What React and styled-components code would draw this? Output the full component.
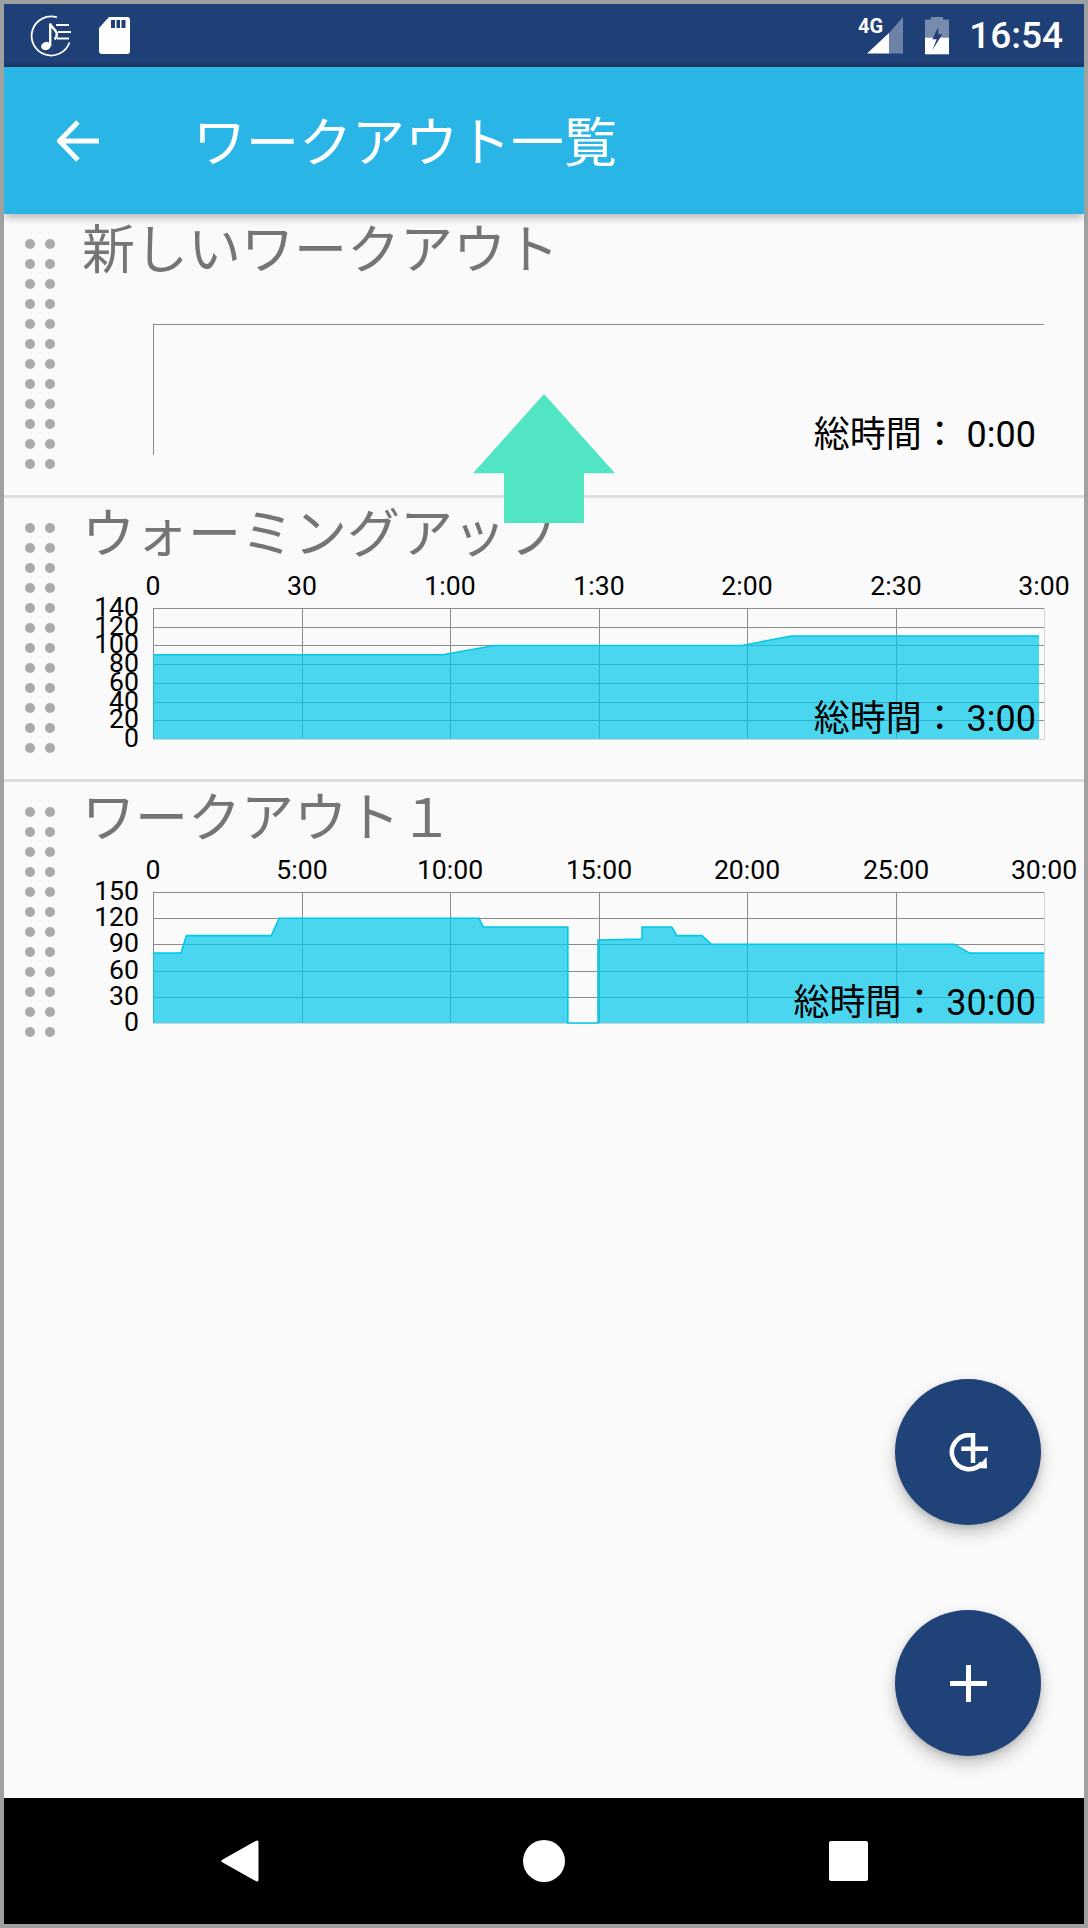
import React from "react";
import styled, { createGlobalStyle } from "styled-components";

const PLOT_LEFT = 71;
const PLOT_WIDTH = 891;
const PLOT_TOP = 34;
const PLOT_HEIGHT = 131;

const WARMUP = {
  title: "ウォーミングアップ",
  total: "3:00",
  duration: 180,
  maxValue: 140,
  xLabels: ["0", "30", "1:00", "1:30", "2:00", "2:30", "3:00"],
  yLabels: ["0", "20", "40", "60", "80", "100", "120", "140"],
  points: [[0, 90], [58.5, 90], [69, 100], [119, 100], [129, 110], [179, 110]],
};

const WORKOUT_1 = {
  title: "ワークアウト１",
  total: "30:00",
  duration: 1800,
  maxValue: 150,
  xLabels: ["0", "5:00", "10:00", "15:00", "20:00", "25:00", "30:00"],
  yLabels: ["0", "30", "60", "90", "120", "150"],
  points: [
    [0, 80], [56.6, 80], [67.5, 100], [239, 100], [255, 120], [658.6, 120], [667, 110],
    [838, 110], [838, 0], [899, 0], [899, 95], [988, 96], [988, 110], [1048, 110],
    [1058, 100], [1109, 100], [1128, 90], [1618, 90], [1650, 80], [1800, 80],
  ],
};

const NEW_WORKOUT = { title: "新しいワークアウト", total: "0:00" };

const WorkoutChart = ({ workout }) => {
  const { duration, maxValue, xLabels, yLabels, points } = workout;
  const empty = !points;
  const toX = (t) => PLOT_LEFT + (t / duration) * PLOT_WIDTH;
  const toY = (v) => PLOT_TOP + PLOT_HEIGHT - (v / maxValue) * PLOT_HEIGHT;
  const bottom = PLOT_TOP + PLOT_HEIGHT;
  const right = PLOT_LEFT + PLOT_WIDTH;

  if (empty) {
    return (
      <ChartSvg viewBox="0 0 1001 180">
        <GridLine x1={PLOT_LEFT} y1={PLOT_TOP + 0.5} x2={right} y2={PLOT_TOP + 0.5} />
        <GridLine x1={PLOT_LEFT + 0.5} y1={PLOT_TOP} x2={PLOT_LEFT + 0.5} y2={bottom} />
      </ChartSvg>
    );
  }

  const line = points.map(([t, v]) => `${toX(t)},${toY(v)}`).join(" ");
  const lastX = toX(points[points.length - 1][0]);
  const area = `${PLOT_LEFT},${bottom} ${line} ${lastX},${bottom}`;

  return (
    <ChartSvg viewBox="0 0 1001 180">
      {yLabels.map((label, i) => {
        const y = Math.round(PLOT_TOP + PLOT_HEIGHT - (i / (yLabels.length - 1)) * PLOT_HEIGHT);
        return (
          <g key={label}>
            {i > 0 && <GridLine x1={PLOT_LEFT} y1={y + 0.5} x2={right} y2={y + 0.5} />}
            <AxisText x={57} y={y + 8} textAnchor="end">{label}</AxisText>
          </g>
        );
      })}
      {xLabels.map((label, i) => {
        const x = Math.round(PLOT_LEFT + (i / (xLabels.length - 1)) * PLOT_WIDTH);
        return (
          <g key={label}>
            <GridLine $light={i === xLabels.length - 1} x1={x + 0.5} y1={PLOT_TOP} x2={x + 0.5} y2={bottom} />
            <AxisText x={x} y={21} textAnchor="middle">{label}</AxisText>
          </g>
        );
      })}
      <GridLine $light x1={PLOT_LEFT} y1={bottom + 0.5} x2={right} y2={bottom + 0.5} />
      <AreaFill points={area} />
      <AreaLine points={line} />
    </ChartSvg>
  );
};

const WorkoutRow = ({ workout, last }) => (
  <Row $last={last}>
    <Handle>
      {Array.from({ length: 24 }).map((_, i) => <Dot key={i} />)}
    </Handle>
    <RowBody>
      <Title>{workout.title}</Title>
      <WorkoutChart workout={workout} />
      <TotalTime>総時間： {workout.total}</TotalTime>
    </RowBody>
  </Row>
);

const App = () => (
  <>
    <GlobalStyle />
    <Frame>
      <StatusBar>
        <StatusLeft>
          <svg width="42" height="42" viewBox="0 0 42 42" fill="none" stroke="#fff">
            <path d="M27 2.4A19.5 19.5 0 1 0 39.5 27.5" strokeWidth="1.8" />
            <ellipse cx="16" cy="31" rx="5" ry="4" fill="#fff" stroke="none" transform="rotate(-20 16 31)" />
            <path d="M20.2 31V8.5c.5 4 5.5 5.500 6.500 9.500.5 2.500-.5 4.500-2 6.500" strokeWidth="2.400" />
            <path d="M26 10h13M28 17h13M27 23.500h12" strokeWidth="2" />
          </svg>
          <svg width="31" height="37" viewBox="0 0 31 37">
            <path d="M10 0H28a3 3 0 0 1 3 3V34a3 3 0 0 1-3 3H3a3 3 0 0 1-3-3V11Z" fill="#fff" />
            <path d="M12 3h4v8h-4ZM17.500 3h3.500v8h-3.500ZM22.500 3h4v8h-4Z" fill="#1f3f77" />
          </svg>
        </StatusLeft>
        <StatusRight>
          <svg width="45" height="38" viewBox="0 0 45 38">
            <NetworkText x="0" y="16">4G</NetworkText>
            <path d="M31 16L45 0V36.500H31Z" fill="#fff" opacity="0.35" />
            <path d="M9 36.500L31 16V36.500Z" fill="#fff" />
          </svg>
          <svg width="24" height="38" viewBox="0 0 24 38">
            <path d="M6 0H18V2.500H24V21H0V2.500H6Z" fill="#fff" opacity="0.4" />
            <rect y="20.700" width="24" height="16.600" fill="#fff" />
            <path d="M13.300 10L7.300 22.300H11.700L7.300 33.300L17.300 17.300H13.300Z" fill="#1f3f77" />
          </svg>
          <Clock>16:54</Clock>
        </StatusRight>
      </StatusBar>

      <AppBar>
        <BackIcon viewBox="0 0 42 42" fill="none" stroke="#fff" strokeWidth="5">
          <path d="M42 21H3M21 2L2.500 21L21 40" />
        </BackIcon>
        <AppTitle>ワークアウト一覧</AppTitle>
      </AppBar>

      <List>
        <WorkoutRow workout={NEW_WORKOUT} />
        <WorkoutRow workout={WARMUP} />
        <WorkoutRow workout={WORKOUT_1} last />

        <DragArrow viewBox="0 0 142 129">
          <path d="M71 0L142 79.300H111V129H31V79.300H0Z" fill="#52e5c3" />
        </DragArrow>

        <FabStack>
          <Fab>
            <svg width="39" height="39" viewBox="0 0 39 39" fill="none" stroke="#fff">
              <path d="M22 2.300A17 17 0 1 0 33 30" strokeWidth="4.500" />
              <path d="M12.300 15.700H39M24 0V30" strokeWidth="4.500" />
              <path d="M37.500 24L38 35.500L27.500 35Z" fill="#fff" stroke="none" />
            </svg>
          </Fab>
          <Fab>
            <svg width="37" height="37" viewBox="0 0 37 37" fill="none" stroke="#fff" strokeWidth="5">
              <path d="M0 18.500H37M18.500 0V37" />
            </svg>
          </Fab>
        </FabStack>
      </List>

      <NavBar>
        <NavSlot>
          <svg width="38" height="42" viewBox="0 0 38 42">
            <path d="M36 2V40L2 21Z" fill="#fff" stroke="#fff" strokeWidth="3" strokeLinejoin="round" />
          </svg>
        </NavSlot>
        <NavSlot>
          <NavCircle />
        </NavSlot>
        <NavSlot>
          <NavSquare />
        </NavSlot>
      </NavBar>
    </Frame>
  </>
);

// ── Styled ──

const GlobalStyle = createGlobalStyle`
  html, body {
    margin: 0;
    padding: 0;
    background: #fff;
  }
`;

const Frame = styled.div`
  position: relative;
  box-sizing: border-box;
  display: flex;
  flex-direction: column;
  width: 1088px;
  height: 1928px;
  border: 4px solid #a0a0a0;
  background: #fafafa;
  font-family: "Noto Sans CJK JP", Roboto, sans-serif;
  overflow: hidden;
`;

const StatusBar = styled.div`
  display: flex;
  align-items: center;
  justify-content: space-between;
  box-sizing: border-box;
  height: 63px;
  padding: 0 21px 0 26px;
  background: linear-gradient(#1f3f77 92%, #1a3563);
`;

const StatusLeft = styled.div`
  display: flex;
  align-items: center;
  gap: 27px;
`;

const StatusRight = styled.div`
  display: flex;
  align-items: center;
  gap: 22px;
`;

const NetworkText = styled.text`
  font-family: Roboto, sans-serif;
  font-size: 20px;
  font-weight: 700;
  fill: #fff;
`;

const Clock = styled.span`
  margin-left: -2px;
  font-family: Roboto, sans-serif;
  font-size: 37px;
  font-weight: 500;
  line-height: 1;
  color: #fff;
`;

const AppBar = styled.header`
  position: relative;
  z-index: 2;
  display: flex;
  align-items: center;
  height: 147px;
  padding-left: 53px;
  background: #29b6e6;
  box-shadow: 0 3px 9px rgba(0, 0, 0, 0.3);
`;

const BackIcon = styled.svg`
  width: 42px;
  height: 42px;
  flex: none;
`;

const AppTitle = styled.h1`
  margin: 0 0 2px 94px;
  font-size: 53px;
  font-weight: 400;
  line-height: 1;
  color: #fff;
`;

const List = styled.main`
  position: relative;
  flex: 1;
`;

const Row = styled.section`
  display: flex;
  height: 284px;
  box-sizing: border-box;
  border-bottom: ${(p) => (p.$last ? "none" : "3px solid #dedede")};
`;

const Handle = styled.div`
  display: grid;
  grid-template-columns: repeat(2, 10px);
  grid-auto-rows: 10px;
  gap: 10px;
  align-self: flex-start;
  margin: 25px 27px 0 21px;
  flex: none;
`;

const Dot = styled.span`
  border-radius: 50%;
  background: #aaaaaa;
`;

const RowBody = styled.div`
  position: relative;
  flex: 1;
`;

const Title = styled.h2`
  height: 76px;
  margin: 0;
  font-size: 53px;
  font-weight: 400;
  line-height: 64px;
  color: #757575;
  white-space: nowrap;
`;

const ChartSvg = styled.svg`
  display: block;
  width: 1001px;
  height: 180px;
  overflow: visible;
`;

const GridLine = styled.line`
  stroke: ${(p) => (p.$light ? "#d4d4d4" : "#8c8c8c")};
  stroke-width: 1;
`;

const AxisText = styled.text`
  font-family: Roboto, sans-serif;
  font-size: 26.6px;
  fill: #000;
`;

const AreaFill = styled.polygon`
  fill: rgba(0, 198, 233, 0.7);
`;

const AreaLine = styled.polyline`
  fill: none;
  stroke: #00c8e6;
  stroke-width: 1.6;
`;

const TotalTime = styled.div`
  position: absolute;
  top: 200px;
  right: 48px;
  font-family: Roboto, "Noto Sans CJK JP", sans-serif;
  font-size: 36px;
  line-height: 42px;
  color: #000;
  white-space: pre;
`;

const DragArrow = styled.svg`
  position: absolute;
  z-index: 1;
  top: 180px;
  left: 469px;
  width: 142px;
  height: 129px;
`;

const FabStack = styled.div`
  position: absolute;
  right: 43px;
  bottom: 42px;
  display: flex;
  flex-direction: column;
  gap: 85px;
`;

const Fab = styled.button`
  display: flex;
  align-items: center;
  justify-content: center;
  width: 146px;
  height: 146px;
  padding: 0;
  border: none;
  border-radius: 50%;
  background: #1f4378;
  box-shadow: 0 8px 16px rgba(0, 0, 0, 0.22), 0 2px 5px rgba(0, 0, 0, 0.12);
`;

const NavBar = styled.nav`
  display: flex;
  justify-content: center;
  align-items: center;
  height: 126px;
  background: #000;
`;

const NavSlot = styled.div`
  display: flex;
  align-items: center;
  justify-content: center;
  width: 304px;
`;

const NavCircle = styled.span`
  width: 42px;
  height: 42px;
  border-radius: 50%;
  background: #fff;
`;

const NavSquare = styled.span`
  width: 39px;
  height: 40px;
  border-radius: 2px;
  background: #fff;
`;

export default App;
